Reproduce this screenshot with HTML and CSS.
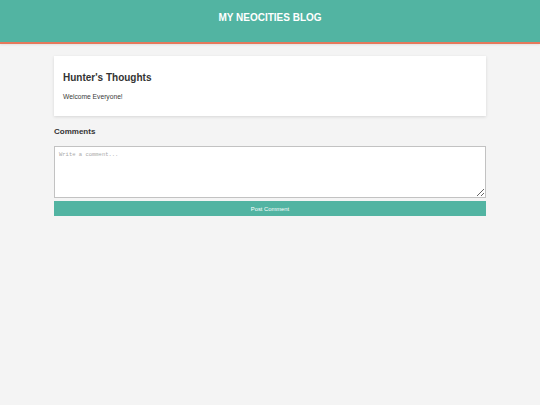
FILE: index.html
```html
<!DOCTYPE html>
<html lang="en">
<head>
<meta charset="utf-8">
<title>My Neocities Blog</title>
<link rel="stylesheet" href="styles.css">
</head>
<body>
<header class="site-header">
  <h1 class="site-title">MY NEOCITIES BLOG</h1>
</header>
<main class="container">
  <article class="post-card">
    <h2 class="post-title">Hunter's Thoughts</h2>
    <p class="post-body">Welcome Everyone!</p>
  </article>
  <section class="comments">
    <h3 class="comments-title">Comments</h3>
    <textarea class="comment-input" placeholder="Write a comment..."></textarea>
    <button class="comment-button" type="button">Post Comment</button>
  </section>
</main>
</body>
</html>
```

FILE: styles.css
```css
* { box-sizing: border-box; }

html, body {
  margin: 0;
  padding: 0;
  background: #f4f4f4;
  font-family: "Liberation Sans", Arial, sans-serif;
  color: #333;
}

.site-header {
  background: #52b4a2;
  height: 44px;
  border-bottom: 2px solid #e5795c;
  box-shadow: 0 1px 2px rgba(0,0,0,0.08);
  padding-top: 12px;
}

.site-title {
  margin: 0;
  text-align: center;
  color: #ffffff;
  font-size: 10px;
  line-height: 12px;
  font-weight: bold;
}

.container {
  width: 432px;
  margin: 12px auto 0;
}

.post-card {
  background: #ffffff;
  padding: 16px 9px 15px;
  box-shadow: 0 1px 3px rgba(0,0,0,0.12);
  height: 60px;
}

.post-title {
  margin: 0 0 9px;
  font-size: 10px;
  line-height: 12px;
  font-weight: bold;
  color: #333;
}

.post-body {
  margin: 0;
  font-size: 6.7px;
  line-height: 8px;
  color: #3a3a3a;
}

.comments {
  margin-top: 11px;
  display: flex;
  flex-direction: column;
}

.comments-title {
  margin: 0 0 9px;
  font-size: 8px;
  line-height: 10px;
  font-weight: bold;
  color: #333;
}

.comment-input {
  display: block;
  width: 100%;
  height: 52px;
  margin: 0;
  padding: 4px;
  border: 1px solid #c2c2c2;
  background: #ffffff;
  font-family: "Liberation Mono", "Courier New", monospace;
  font-size: 5.5px;
  line-height: 7px;
  color: #333;
}

.comment-input::placeholder {
  color: #a8a8a8;
}

.comment-button {
  display: block;
  width: 100%;
  height: 15px;
  margin-top: 3px;
  padding: 0;
  border: none;
  background: #52b4a2;
  color: #ffffff;
  font-family: "Liberation Sans", Arial, sans-serif;
  font-size: 5.8px;
  box-shadow: 0 1px 0 #cfe9e3;
}
```
